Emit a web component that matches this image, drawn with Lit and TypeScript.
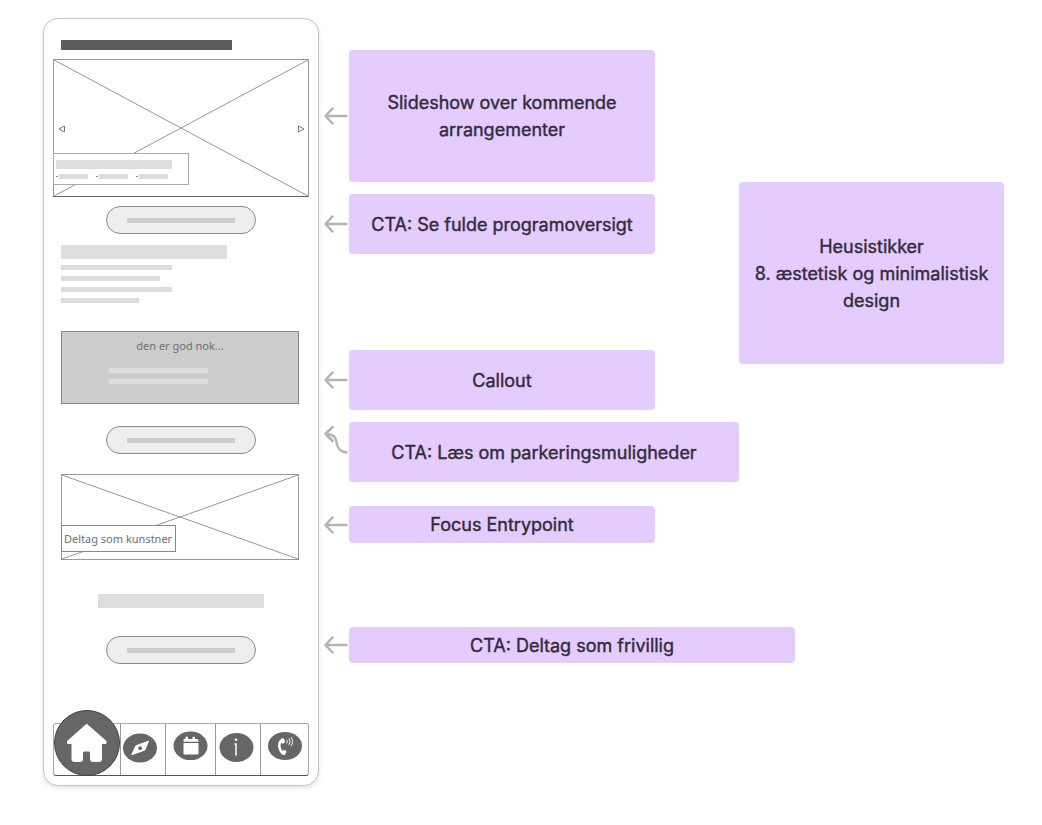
import { LitElement, html, css, svg } from "lit";
import { customElement, property } from "lit/decorators.js";

/** Box with crossed diagonals that stands in for a picture. */
@customElement("image-placeholder")
class ImagePlaceholder extends LitElement {
  static styles = css`
    :host {
      display: grid;
      box-sizing: border-box;
      border: 1px solid #999;
      background: #fff;
    }
    .cross,
    .layer {
      grid-area: 1 / 1;
      min-width: 0;
      min-height: 0;
    }
    .cross {
      width: 100%;
      height: 100%;
      stroke: #7c7c7c;
      stroke-width: 0.8;
    }
    .layer {
      display: grid;
    }
  `;

  render() {
    return html`
      <svg class="cross" viewBox="0 0 100 100" preserveAspectRatio="none" aria-hidden="true">
        <line x1="0" y1="0" x2="100" y2="100" vector-effect="non-scaling-stroke" />
        <line x1="100" y1="0" x2="0" y2="100" vector-effect="non-scaling-stroke" />
      </svg>
      <div class="layer"><slot></slot></div>
    `;
  }
}

const navItems = [
  {
    label: "Hjem",
    kind: "home",
    width: 66,
    icon: svg`
      <circle cx="33" cy="33" r="32.5" fill="#666" stroke="#444" />
      <path fill="#fff" stroke="#fff" stroke-width="2" stroke-linejoin="round"
        d="M32.700 15 14 31.500v1.500h4.500V49q0 2 2 2h5.500q2 0 2-2v-6q0-2.500 2.500-2.500h4q2.500 0 2.500 2.500v6q0 2 2 2h6q2 0 2-2V33h4.500v-1.500Z" />`,
  },
  {
    label: "Udforsk",
    kind: "",
    width: 44,
    icon: svg`
      <ellipse cx="19" cy="24" rx="17" ry="14.500" fill="#666" />
      <path fill="#fff" stroke="#fff" stroke-linejoin="round" d="M27.500 17.200 23.800 26 10.800 30.800 14.800 21.800Z" />
      <circle cx="19.200" cy="24.200" r="1.900" fill="#666" />`,
  },
  {
    label: "Kalender",
    kind: "",
    width: 49,
    icon: svg`
      <ellipse cx="24.500" cy="21.800" rx="17" ry="14.300" fill="#666" />
      <path fill="#fff" d="M17.500 15h2v-2.200h2.500V15h4.500v-2.200H29V15h2q1.500 0 1.500 1.500v1.300h-15v-1.300Q17.500 15 18 15Z" />
      <path fill="#fff" d="M17.500 19h15v10.200q0 1.300-1.300 1.300H18.800q-1.300 0-1.300-1.300Z" />`,
  },
  {
    label: "Information",
    kind: "",
    width: 44,
    icon: svg`
      <ellipse cx="20.500" cy="23.500" rx="17" ry="14.500" fill="#666" />
      <circle cx="20" cy="15.700" r="1.300" fill="#fff" />
      <path fill="none" stroke="#fff" stroke-width="1.500" d="M18.300 20H20v11.500" />`,
  },
  {
    label: "Kontakt",
    kind: "",
    width: 46,
    icon: svg`
      <ellipse cx="24" cy="22" rx="17" ry="14" fill="#666" />
      <path fill="none" stroke="#fff" stroke-width="2.600" d="M21.500 15.500Q17 18.500 18.800 24.500T24 29.500" />
      <path fill="none" stroke="#fff" stroke-width="4" stroke-linecap="round" stroke-linejoin="round"
        d="M21.500 16.300l.4 1.300M22.600 28.300l.8-.3" />
      <path fill="none" stroke="#fff" stroke-width="1" stroke-linecap="round"
        d="M26 16.200q1 1.300-.2 3M28.200 14.800q2.100 2.800-.1 5.700M30.300 13.500q2.800 4-.1 8.200" />`,
  },
];

/** Wireframe of the mobile start page. */
@customElement("phone-wireframe")
class PhoneWireframe extends LitElement {
  static styles = css`
    :host {
      display: flex;
      flex-direction: column;
      box-sizing: border-box;
      padding: 21px 9px 9px;
      border: 1px solid #c6c6c6;
      border-radius: 15px;
      background: #fff;
      box-shadow: 0 2px 5px rgba(0, 0, 0, 0.12);
      font-family: "Noto Sans", "Open Sans", sans-serif;
      font-size: 11px;
      font-weight: 400;
      line-height: 16px;
      color: #6f6f6f;
      -webkit-text-stroke: 0;
    }
    .bar {
      height: 5px;
      background: #dcdddf;
    }
    .bar.title {
      width: 171px;
      height: 10px;
      margin-left: 8px;
      background: #5c5c5c;
    }
    .bar.heading {
      width: 166px;
      height: 14px;
    }
    .slideshow {
      height: 138px;
      margin-top: 9px;
      border-bottom-color: #666;
    }
    .slides {
      display: grid;
      grid-template-columns: 1fr auto;
      grid-template-rows: 1fr 32px;
      padding-bottom: 11px;
    }
    .step {
      display: grid;
      align-content: end;
      justify-content: center;
      width: 15px;
      height: 73px;
      padding: 0;
      border: 0;
      background: none;
    }
    .step svg {
      width: 8px;
      height: 8px;
      fill: none;
      stroke: #777;
    }
    .slide-text {
      box-sizing: border-box;
      width: 136px;
      margin-left: -1px;
      padding: 6px 2px;
      border: 1px solid #aaa;
      background: #fff;
    }
    .slide-text .bar.lead {
      width: 116px;
      height: 9px;
    }
    .facts {
      display: flex;
      gap: 8px;
      margin: 5px 0 0;
      padding: 0;
      list-style: none;
    }
    .facts li {
      display: flex;
      align-items: center;
      gap: 1px;
    }
    .facts li::before {
      content: "";
      width: 2px;
      height: 1px;
      background: #888;
    }
    .facts .bar {
      width: 29px;
    }
    .cta {
      display: grid;
      place-items: center;
      align-self: center;
      width: 150px;
      height: 28px;
      margin-top: 9px;
      padding: 0;
      border: 1px solid #8a8a8a;
      border-radius: 14px;
      background: #edefee;
    }
    .cta .bar {
      width: 108px;
      background: #cccdcc;
    }
    .text {
      display: grid;
      gap: 6px;
      margin: 11px 8px 0;
    }
    .long {
      width: 111px;
    }
    .medium {
      width: 99px;
    }
    .short {
      width: 78px;
    }
    .callout {
      display: flex;
      flex-direction: column;
      gap: 6px;
      box-sizing: border-box;
      min-height: 73px;
      margin: 28px 10px 0 8px;
      padding: 6px 47px;
      border: 1px solid #8a8a8a;
      background: #ccc;
    }
    .callout p {
      margin: 0 0 8px;
      text-align: center;
    }
    .callout .bar {
      width: 99px;
    }
    .after-callout {
      margin-top: 22px;
    }
    .entry {
      height: 86px;
      margin: 20px 10px 0 8px;
    }
    .entry-link {
      align-self: end;
      justify-self: start;
      margin: 0 0 7px -1px;
      padding: 5px 3px 4px 2px;
      border: 1px solid #888;
      background: #fff;
      color: inherit;
      text-decoration: none;
      white-space: nowrap;
    }
    .bar.centred {
      align-self: center;
      margin-top: 34px;
    }
    .after-heading {
      margin-top: 28px;
    }
    .nav {
      display: flex;
      box-sizing: border-box;
      height: 53px;
      margin-top: 59px;
      border: 1px solid #aaa;
      border-bottom-color: #555;
      border-radius: 3px;
    }
    .nav a {
      display: flex;
      align-items: flex-end;
      border-left: 1px solid #999;
    }
    .nav a.home {
      margin-bottom: -1px;
      border-left: 0;
    }
    .nav svg {
      display: block;
      flex: none;
      height: 51px;
    }
    .nav .home svg {
      height: 66px;
    }
  `;

  render() {
    return html`
      <div class="bar title"></div>
      <image-placeholder class="slideshow">
        <div class="slides">
          <button class="step" aria-label="Forrige">
            <svg viewBox="0 0 8 8"><path d="M6.500 1v6L1 4Z" /></svg>
          </button>
          <button class="step" aria-label="Næste">
            <svg viewBox="0 0 8 8"><path d="M1.500 1v6L7 4Z" /></svg>
          </button>
          <div class="slide-text">
            <div class="bar lead"></div>
            <ul class="facts">
              ${[0, 1, 2].map(() => html`<li><div class="bar"></div></li>`)}
            </ul>
          </div>
        </div>
      </image-placeholder>
      <button class="cta" aria-label="Se fulde programoversigt"><span class="bar"></span></button>
      <div class="text">
        <div class="bar heading"></div>
        <div class="bar long"></div>
        <div class="bar medium"></div>
        <div class="bar long"></div>
        <div class="bar short"></div>
      </div>
      <section class="callout">
        <p>den er god nok...</p>
        <div class="bar"></div>
        <div class="bar"></div>
      </section>
      <button class="cta after-callout" aria-label="Læs om parkeringsmuligheder">
        <span class="bar"></span>
      </button>
      <image-placeholder class="entry">
        <a class="entry-link" href="#kunstner">Deltag som kunstner</a>
      </image-placeholder>
      <div class="bar heading centred"></div>
      <button class="cta after-heading" aria-label="Deltag som frivillig">
        <span class="bar"></span>
      </button>
      <nav class="nav">
        ${navItems.map(
          (item) => html`
            <a class=${item.kind} href="#${item.label.toLowerCase()}" aria-label=${item.label}>
              <svg width=${item.width} viewBox="0 0 ${item.width} ${item.kind === "home" ? 66 : 51}">
                ${item.icon}
              </svg>
            </a>
          `
        )}
      </nav>
    `;
  }
}

/** Connector from a note to the part of the wireframe it describes. */
@customElement("note-arrow")
class NoteArrow extends LitElement {
  @property({ type: Boolean }) curved = false;

  static styles = css`
    :host {
      display: flex;
      align-items: center;
    }
    svg {
      width: 25px;
      height: 60px;
      fill: none;
      stroke: #b3b3b3;
      stroke-width: 2.5px;
      stroke-linecap: round;
      stroke-linejoin: round;
    }
  `;

  render() {
    return html`
      <svg viewBox="0 0 25 60" aria-hidden="true">
        ${this.curved
          ? svg`<path d="M8.500 5 1.500 12 8.500 19M1.500 12C9 12 12 15 12.500 20S16 30 22.500 30.500" />`
          : svg`<path d="M8.500 22.500 1.500 30 8.500 37.500M1.500 30H22.500" />`}
      </svg>
    `;
  }
}

const notes = [
  { text: "Slideshow over kommende arrangementer", size: "narrow padded" },
  { text: "CTA: Se fulde programoversigt", size: "narrow" },
  { text: "Callout", size: "narrow" },
  { text: "CTA: Læs om parkeringsmuligheder", size: "medium", curved: true },
  { text: "Focus Entrypoint", size: "narrow" },
  { text: "CTA: Deltag som frivillig", size: "wide" },
];

@customElement("app-root")
class AppRoot extends LitElement {
  static styles = css`
    :host {
      display: block;
      background: #fff;
      font-family: Inter, sans-serif;
      font-size: 18px;
      font-weight: 400;
      -webkit-text-stroke: 0.4px;
      line-height: 27px;
      color: #322b3a;
    }
    .board {
      display: grid;
      grid-template-columns: 276px 1fr;
      align-items: start;
      column-gap: 5px;
      padding: 18px 38px 38px 43px;
    }
    .notes {
      display: grid;
      grid-template-columns: 25px 306fr 84fr 56fr 209fr;
      grid-template-rows:
        minmax(132px, auto) 12px
        minmax(60px, auto) 96px
        minmax(60px, auto) 12px
        minmax(60px, auto) 24px
        minmax(37px, auto) 84px
        minmax(36px, auto);
      padding-top: 32px;
    }
    .note {
      display: grid;
      place-items: center;
      box-sizing: border-box;
      margin: 0;
      padding: 0 12px;
      border-radius: 4px;
      background: #e4ccff;
      text-align: center;
    }
    .padded {
      padding: 0 24px;
    }
    .row {
      display: contents;
    }
    .row:nth-child(1) > * { grid-row: 1; }
    .row:nth-child(2) > * { grid-row: 3; }
    .row:nth-child(3) > * { grid-row: 5; }
    .row:nth-child(4) > * { grid-row: 7; }
    .row:nth-child(5) > * { grid-row: 9; }
    .row:nth-child(6) > * { grid-row: 11; }
    .arrow {
      grid-column: 1;
      height: 0;
      align-self: center;
    }
    .narrow {
      grid-column: 2;
    }
    .medium {
      grid-column: 2 / 4;
    }
    .wide {
      grid-column: 2 / 5;
    }
    .heuristic {
      grid-column: 4 / 6;
      grid-row: 1 / 8;
      align-self: start;
      min-height: 182px;
      margin-top: 132px;
    }
  `;

  render() {
    return html`
      <main class="board">
        <phone-wireframe></phone-wireframe>
        <section class="notes">
          ${notes.map(
            (note) => html`
              <div class="row">
                <note-arrow class="arrow" ?curved=${note.curved}></note-arrow>
                <p class="note ${note.size}">${note.text}</p>
              </div>
            `
          )}
          <p class="note heuristic">
            <span>Heusistikker<br />8. æstetisk og minimalistisk design</span>
          </p>
        </section>
      </main>
    `;
  }
}
